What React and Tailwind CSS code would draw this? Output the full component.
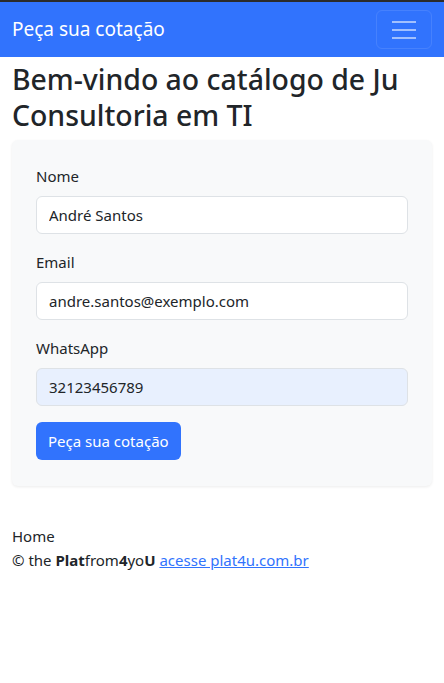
const fields = [
  { label: 'Nome', value: 'André Santos', autofill: false },
  { label: 'Email', value: 'andre.santos@exemplo.com', autofill: false },
  { label: 'WhatsApp', value: '32123456789', autofill: true },
];

const App = () => {
  return (
    <div className="min-h-[683px] bg-white text-[#212529] font-['Noto_Sans',sans-serif]">
      <div className="h-[2px] bg-[#2b2b2b]" />
      <nav className="flex h-[55px] items-center justify-between bg-[#3173fd] pl-3 pr-3">
        <span className="text-[19px] text-white">Peça sua cotação</span>
        <button
          type="button"
          className="flex h-[39px] w-[56px] flex-col items-center justify-center gap-[6px] rounded-md border border-white/10"
        >
          <span className="block h-[2px] w-6 bg-white/55" />
          <span className="block h-[2px] w-6 bg-white/55" />
          <span className="block h-[2px] w-6 bg-white/55" />
        </button>
      </nav>

      <main className="px-3">
        <h1 className="mt-[4px] text-[28.4px] font-medium leading-[36px]">
          Bem-vindo ao catálogo de Ju Consultoria em TI
        </h1>

        <form className="mt-[7px] rounded-md bg-[#f8f9fa] px-6 pb-[26px] pt-[24px] shadow-[0_1px_3px_rgba(0,0,0,0.08)]">
          {fields.map((field) => (
            <div key={field.label} className="mb-4">
              <label className="mb-2 block text-[15px] leading-6">{field.label}</label>
              <input
                readOnly
                value={field.value}
                className={`block h-[38px] w-full rounded-md border border-[#dee2e6] px-3 text-[15px] text-[#212529] outline-none ${
                  field.autofill ? 'bg-[#e8f0fe]' : 'bg-white'
                }`}
              />
            </div>
          ))}
          <button
            type="button"
            className="h-[38px] rounded-md bg-[#3173fd] px-3 text-[15px] text-white"
          >
            Peça sua cotação
          </button>
        </form>

        <footer className="mt-[38px] text-[15px] leading-6">
          <div>Home</div>
          <div>
            © the <b>Plat</b>from<b>4</b>yo<b>U</b>{' '}
            <a href="#" className="text-[#3173fd] underline">
              acesse plat4u.com.br
            </a>
          </div>
        </footer>
      </main>
    </div>
  );
};

export default App;
